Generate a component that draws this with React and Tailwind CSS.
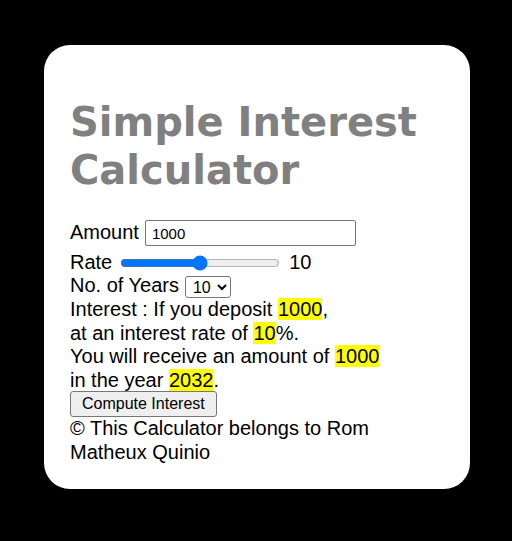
import React from "react";

export default function App() {
  const hl = "bg-[#ffff00]";
  return (
    <div className="w-[512px] h-[541px] bg-black pt-[45px] pl-[44px]">
      <div className="w-[426px] h-[444px] bg-white rounded-[26px] px-[26px] pt-[26px] text-black text-[20px] leading-[23.5px] font-['Liberation_Sans',Arial,sans-serif]">
        <h1 className="mt-[27px] mb-[26px] text-[40px] leading-[48px] font-bold text-[#808080] font-['DejaVu_Sans',Verdana,sans-serif]">
          Simple Interest Calculator
        </h1>
        <div className="flex items-center h-[26px]">
          <span>Amount</span>
          <input
            type="text"
            defaultValue="1000"
            className="ml-[6px] w-[211px] h-[26px] border border-[#767676] rounded-[2px] pl-[6px] text-[15px] text-black"
          />
        </div>
        <div className="flex items-center h-[23px] mt-[5px]">
          <span>Rate</span>
          <input
            type="range"
            min="0"
            max="20"
            defaultValue="10"
            className="ml-[8px] w-[160px] h-[16px]"
          />
          <span className="ml-[9px]">10</span>
        </div>
        <div className="flex items-center h-[24px]">
          <span>No. of Years</span>
          <select
            defaultValue="10"
            className="ml-[6px] w-[46px] h-[22px] mt-[2px] text-[16px] border border-[#767676] rounded-[3px] pl-[3px]"
          >
            <option value="10">10</option>
          </select>
        </div>
        <div>
          Interest : If you deposit <span className={hl}>1000</span>,<br />
          at an interest rate of <span className={hl}>10</span>%.<br />
          You will receive an amount of <span className={hl}>1000</span>
          <br />
          in the year <span className={hl}>2032</span>.
        </div>
        <button className="block -mt-[1px] h-[26px] px-[11px] text-[16px] leading-[18px] bg-[#efefef] border border-[#767676] rounded-[3px]">
          Compute Interest
        </button>
        <div>© This Calculator belongs to Rom Matheux Quinio</div>
      </div>
    </div>
  );
}
